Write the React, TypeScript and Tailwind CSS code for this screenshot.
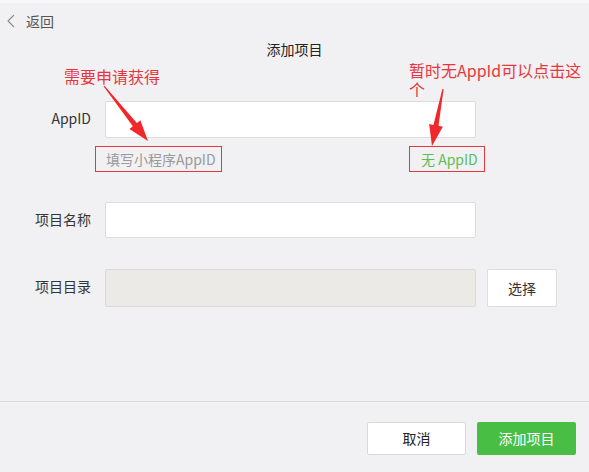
import React from "react";

type Pt = [number, number];

// tapered arrow: thin tail, wide head
const arrowPoints = (tail: Pt, tip: Pt, headLen = 21, headHalf = 7, shaftHalf = 2.6) => {
  const dx = tip[0] - tail[0];
  const dy = tip[1] - tail[1];
  const len = Math.sqrt(dx * dx + dy * dy);
  const ux = dx / len;
  const uy = dy / len;
  const nx = -uy;
  const ny = ux;
  const bx = tip[0] - ux * headLen;
  const by = tip[1] - uy * headLen;
  const pts: Pt[] = [
    [tail[0] + nx * 0.6, tail[1] + ny * 0.6],
    [bx + nx * shaftHalf, by + ny * shaftHalf],
    [bx + nx * headHalf, by + ny * headHalf],
    tip,
    [bx - nx * headHalf, by - ny * headHalf],
    [bx - nx * shaftHalf, by - ny * shaftHalf],
    [tail[0] - nx * 0.6, tail[1] - ny * 0.6],
  ];
  return pts.map((p) => p.join(",")).join(" ");
};

const Row: React.FC<{ label: string; children: React.ReactNode; className?: string }> = ({
  label,
  children,
  className,
}) => (
  <div className={"flex items-start " + (className ?? "")}>
    <div className="w-[91px] shrink-0 pt-[7px] text-right text-[14px] leading-[20px] text-[#353535]">
      {label}
    </div>
    <div className="ml-[14px] flex items-start gap-[11px]">{children}</div>
  </div>
);

export default function App() {
  return (
    <div
      className="relative flex h-[472px] w-[589px] flex-col overflow-hidden bg-[#f1f0f2]"
      style={{ fontFamily: '"Microsoft YaHei", "Noto Sans CJK SC", sans-serif' }}
    >
      <div className="h-[3px] bg-[#f7f7f8]" />

      {/* back */}
      <div className="flex h-[36px] items-center pl-[7px] text-[14px] text-[#555]">
        <svg width="8" height="14" viewBox="0 0 8 14" className="mr-[11px]">
          <path d="M7 1 L1 7 L7 13" fill="none" stroke="#8a8a8a" strokeWidth="1.1" />
        </svg>
        <span>返回</span>
      </div>

      <div className="h-[20px] text-center text-[14px] leading-[20px] text-[#222]">添加项目</div>

      {/* form */}
      <div className="mt-[42px] flex flex-col">
        <Row label="AppID">
          <div className="h-[37px] w-[371px] rounded-[2px] border border-[#dcdcdc] bg-white" />
        </Row>

        <div className="mt-[8px] flex pl-[95px]">
          <div className="flex h-[26px] w-[127px] items-center border border-[#e0393e] pl-[10px] text-[14px] text-[#9a9a9a]">
            填写小程序AppID
          </div>
          <div className="ml-[187px] flex h-[26px] w-[76px] items-center border border-[#e0393e] pl-[11px] text-[14px] text-[#5cbf55]">
            无 AppID
          </div>
        </div>

        <Row label="项目名称" className="mt-[30px]">
          <div className="h-[36px] w-[371px] rounded-[2px] border border-[#dcdcdc] bg-white" />
        </Row>

        <Row label="项目目录" className="mt-[31px]">
          <div className="h-[38px] w-[371px] rounded-[2px] border border-[#dcdad6] bg-[#ebeae7]" />
          <button className="h-[38px] w-[70px] rounded-[2px] border border-[#dedede] bg-white text-[14px] text-[#333]">
            选择
          </button>
        </Row>
      </div>

      <div className="flex-1" />

      {/* footer */}
      <div className="flex h-[71px] justify-end gap-[11px] border-t border-[#dadada] pr-[13px] pt-[20px]">
        <button className="h-[33px] w-[99px] rounded-[2px] border border-[#d9d9d9] bg-white text-[14px] text-[#222]">
          取消
        </button>
        <button className="h-[33px] w-[99px] rounded-[2px] bg-[#48be45] text-[14px] text-white">
          添加项目
        </button>
      </div>

      {/* annotations */}
      <div className="absolute left-[64px] top-[67px] text-[16px] leading-[19px] text-[#e8373c]">
        需要申请获得
      </div>
      <div className="absolute left-[409px] top-[61px] text-[16px] leading-[19px] text-[#e8373c]">
        暂时无AppId可以点击这
        <br />个
      </div>
      <svg className="pointer-events-none absolute left-0 top-0" width="589" height="472">
        <polygon points={arrowPoints([104, 86], [148, 141])} fill="#f0282c" />
        <polygon points={arrowPoints([443, 89], [432, 146])} fill="#f0282c" />
      </svg>
    </div>
  );
}
